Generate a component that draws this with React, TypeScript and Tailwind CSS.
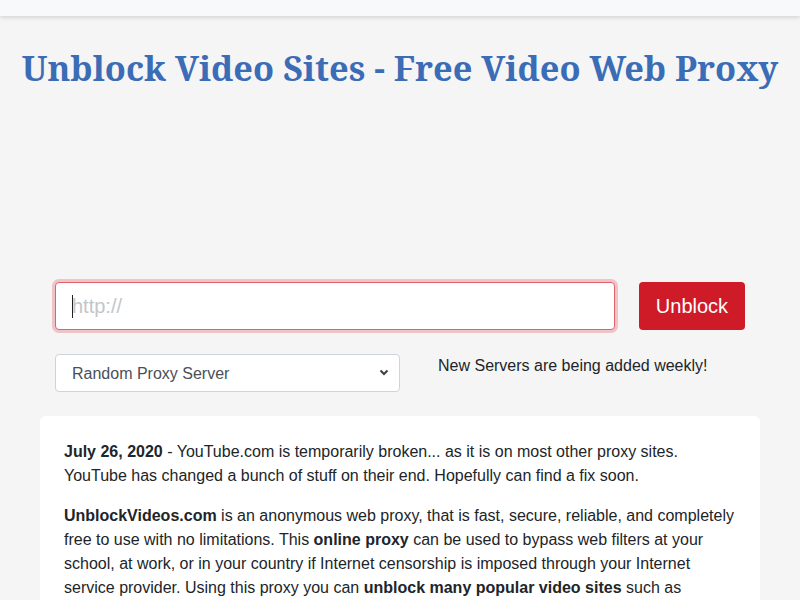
import { useState } from 'react'

function TopBar() {
  return <div className="h-4 bg-[#f8f9fa] shadow-[0_2px_4px_rgba(0,0,0,0.12)]" />
}

function ProxyForm() {
  const [url, setUrl] = useState('')
  return (
    <div className="mx-auto w-[720px] px-[15px]">
      <div className="flex items-center gap-6">
        <div className="relative flex-1">
          <input
            value={url}
            onChange={(e) => setUrl(e.target.value)}
            placeholder="http://"
            className="h-12 w-full rounded border border-[#e4606d] bg-white px-4 text-xl text-[#495057] shadow-[0_0_0_3px_rgba(220,53,69,0.25)] outline-none placeholder:text-[#c3c6c9]"
          />
          {url === '' && <span className="absolute left-[17px] top-[13px] h-[23px] w-px bg-[#222]" />}
        </div>
        <button
          type="button"
          className="h-12 w-[106px] rounded bg-[#cf1a27] text-xl text-white"
        >
          Unblock
        </button>
      </div>
      <div className="mt-6 flex">
        <div className="relative w-[345px]">
          <select className="h-[38px] w-full appearance-none rounded border border-[#ced4da] bg-white px-4 pt-px text-base text-[#495057] outline-none">
            <option>Random Proxy Server</option>
          </select>
          <svg className="pointer-events-none absolute right-[11px] top-[15px]" width="10" height="7" viewBox="0 0 10 7">
            <path d="M1.5 1.5 L5 5 L8.5 1.5" fill="none" stroke="#3c4043" strokeWidth="2" />
          </svg>
        </div>
        <p className="pl-[38px] text-base text-[#212529]">New Servers are being added weekly!</p>
      </div>
    </div>
  )
}

function InfoCard() {
  return (
    <div className="mx-auto mt-6 w-[720px] rounded-md bg-white px-6 pt-6 pb-4 text-base leading-6 text-[#212529]">
      <p className="mb-4">
        <b>July 26, 2020</b> - YouTube.com is temporarily broken... as it is on most other proxy sites. YouTube has
        changed a bunch of stuff on their end. Hopefully can find a fix soon.
      </p>
      <p className="mb-4">
        <b>UnblockVideos.com</b> is an anonymous web proxy, that is fast, secure, reliable, and completely free to use
        with no limitations. This <b>online proxy</b> can be used to bypass web filters at your school, at work, or in
        your country if Internet censorship is imposed through your Internet service provider. Using this proxy you can{' '}
        <b>unblock many popular video sites</b> such as YouTube, Dailymotion, Vimeo and many more.
      </p>
    </div>
  )
}

export default function App() {
  return (
    <div className="min-h-screen bg-[#f5f5f5] font-['Liberation_Sans',Arial,sans-serif]">
      <TopBar />
      <h1 className="whitespace-nowrap pt-[28px] text-center font-['Noto_Serif','DejaVu_Serif',serif] text-[34.4px] font-bold leading-[48px] text-[#3b6cb6]">
        Unblock Video Sites - Free Video Web Proxy
      </h1>
      <div className="h-[190px]" />
      <ProxyForm />
      <InfoCard />
    </div>
  )
}
